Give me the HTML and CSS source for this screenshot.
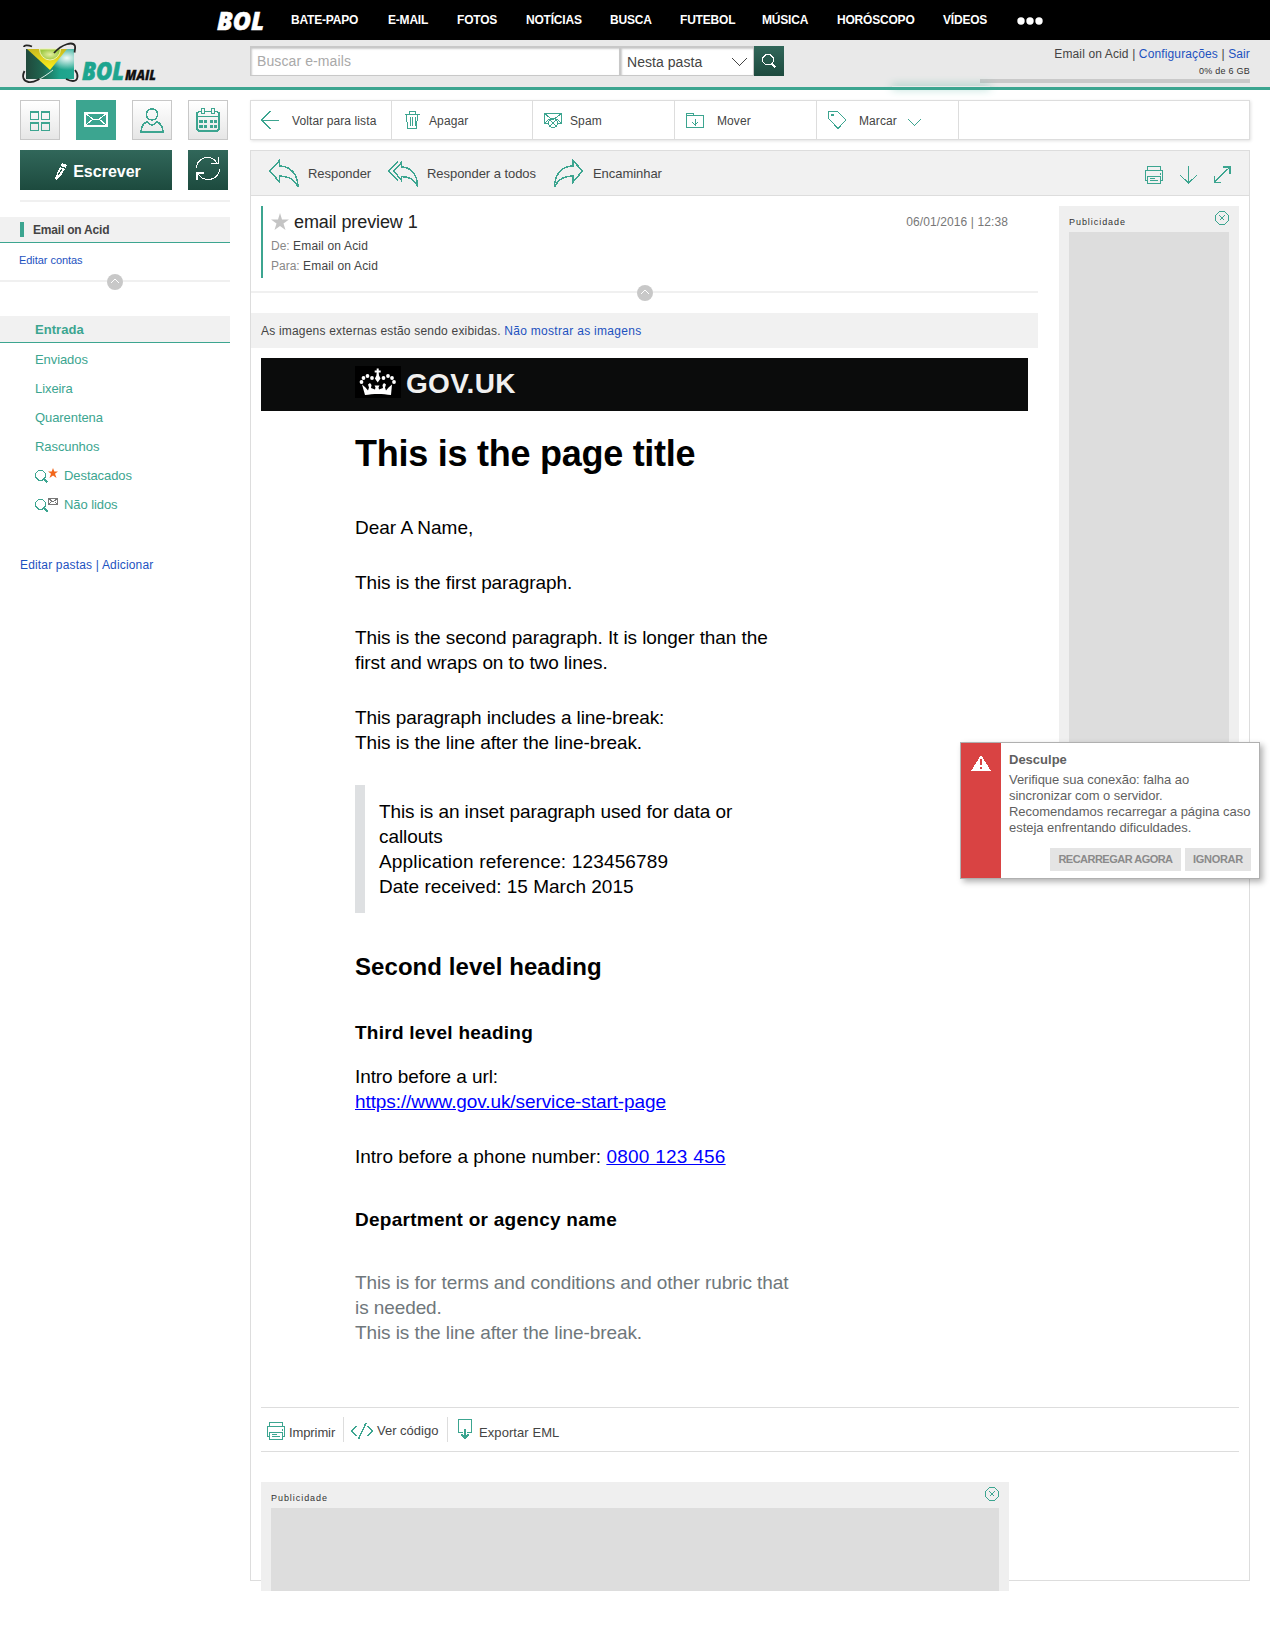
FILE: index.html
```html
<!DOCTYPE html>
<html lang="pt-BR">
<head>
<meta charset="utf-8">
<title>BOL Mail</title>
<link rel="stylesheet" href="styles.css">
</head>
<body>
<svg class="defs" width="0" height="0">
  <symbol id="printer" viewBox="0 0 18 18"><path d="M2.5 4.5v-4h13v4M2.5 14.500h-2v-10h17v10h-2M2.500 17.500v-7h13v7zM15 6.500v2M4.500 12.500h5M4.500 14.500h8"/></symbol>
  <symbol id="close" viewBox="0 0 14 14"><path d="M4.500.5h5l4 4v5l-4 4h-5l-4-4v-5zM4.500 4.500l5 5M9.500 4.500l-5 5"/></symbol>
  <symbol id="collapse" viewBox="0 0 16 16"><circle cx="8" cy="8" r="8" fill="#c8c8c8" stroke="none" shape-rendering="auto"/><path d="M3.500 9.500L8 5l4.500 4.500" stroke="#fff"/></symbol>
  <symbol id="lens" viewBox="0 0 13 13"><path d="M3.500.5h4l3 3v3.500l-3 3h-4l-3-3V3.500z"/><path d="M8.500 8.500l4 4" stroke-width="2"/></symbol>
</svg>

<nav class="topbar">
  <svg class="bol" width="60" height="40"><text x="1" y="29.500" textLength="47" lengthAdjust="spacingAndGlyphs">BOL</text></svg>
  <div class="topnav">
    <a>BATE-PAPO</a><a>E-MAIL</a><a>FOTOS</a><a>NOTÍCIAS</a><a>BUSCA</a><a>FUTEBOL</a><a>MÚSICA</a><a>HORÓSCOPO</a><a>VÍDEOS</a>
    <svg width="26" height="8" fill="#fff"><circle cx="4" cy="4" r="3.700"/><circle cx="13" cy="4" r="3.700"/><circle cx="22" cy="4" r="3.700"/></svg>
  </div>
</nav>

<header class="header">
  <svg class="logo" width="150" height="47" viewBox="0 0 150 47">
    <defs>
      <linearGradient id="env" x1="0" y1="0" x2="1" y2="0"><stop offset="0" stop-color="#20483b"/><stop offset=".35" stop-color="#1f6650"/><stop offset=".7" stop-color="#1da38b"/><stop offset="1" stop-color="#20a891"/></linearGradient>
      <linearGradient id="flap" x1="0" y1="0" x2="0" y2="1"><stop offset="0" stop-color="#c8b820"/><stop offset="1" stop-color="#fff21a"/></linearGradient>
      <radialGradient id="shine" cx=".85" cy=".3" r=".4"><stop offset="0" stop-color="#fff" stop-opacity=".95"/><stop offset="1" stop-color="#fff" stop-opacity="0"/></radialGradient>
      <radialGradient id="ball"><stop offset="0" stop-color="#e3efa0"/><stop offset="1" stop-color="#9cc840"/></radialGradient>
    </defs>
    <path d="M6 9h48v30H6z" fill="url(#env)"/>
    <path d="M6 9h48v30H6z" fill="url(#shine)"/>
    <path d="M7 9h40L30 30z" fill="url(#flap)"/>
    <path d="M19.500 9h21a10.500 11 0 0 1-21 0z" fill="url(#ball)" stroke="#edf5b0"/>
    <path d="M33 30C28 34 22 38 16 41" fill="none" stroke="#dcefe7" stroke-width="1"/>
    <path d="M34 13C42 4 53 1 55 6c.5 2 0 4-.5 6.500M12 6.500C8 5 4 5 4 7M4.500 31c-3 6-1 10 4 11 4 1 7-1 11-3M55 30c4 5 3 11-2 11-3 0-5-1-7-2" fill="none" stroke="#242424" stroke-width="1.800"/>
    <text class="logo-bol" x="62" y="39.500" textLength="42" lengthAdjust="spacingAndGlyphs">BOL</text>
    <text class="logo-mail" x="105" y="39.500" textLength="31" lengthAdjust="spacingAndGlyphs">MAIL</text>
  </svg>
  <div class="search">
    <div class="search-input">Buscar e-mails</div>
    <div class="search-scope"><span>Nesta pasta</span><svg class="ico dark" width="15" height="9"><path d="M.5.5L7.500 7.500l7-7"/></svg></div>
    <div class="search-btn"><svg class="ico white" width="14" height="14" viewBox="0 0 13 13"><use href="#lens"/></svg></div>
  </div>
  <div class="account">
    <div class="account-links">Email on Acid | <a>Configurações</a> | <a>Sair</a></div>
    <div class="quota">0% de 6 GB</div>
    <div class="quota-bar"></div>
  </div>
  <div class="loading"></div>
</header>

<div class="layout">
  <aside class="sidebar">
    <div class="tiles">
      <div class="tile"><svg class="ico t-grid" width="20" height="20" fill-rule="evenodd"><path d="M0 0h9v9H0zM1 2v6h7V2zM11 0h9v9h-9zM12 2v6h7V2zM0 11h9v9H0zM1 13v6h7v-6zM11 11h9v9h-9zM12 13v6h7v-6z"/></svg></div>
      <div class="tile active"><svg class="ico white" width="24" height="15"><path d="M1 1h22v13H1z" stroke-width="2"/><path d="M2 2l7 5 3 1 3-1 7-5M2 13l7-6M22 13l-7-6"/></svg></div>
      <div class="tile"><svg class="ico" width="24" height="25"><path d="M12 1c3.500 0 5.500 2 5.500 5.500S15 12 12 12 6.500 10 6.500 6.500 8.500 1 12 1zM1 24h22c0-6-3-9-6.500-10.500C15 16 13 17 12 17s-3-1-4.500-3.500C4 15 1 18 1 24z" stroke-width="1.500"/></svg></div>
      <div class="tile"><svg class="ico" width="24" height="24"><path d="M5.500 3.500H3L1 5v16l2 2h18l2-2V5l-2-1.500h-2.500M9 3.500h6M1 8.500h22" stroke-width="1.500"/><path d="M5.500.500h3v5h-3zM15.500.500h3v5h-3z"/><path d="M3 12h4v3H3zM8 12h3v3H8zM14 12h3v3h-3zM18 12h3v3h-3zM3 17h4v3H3zM8 17h3v3H8zM14 17h3v3h-3zM18 17h3v3h-3z" fill="#3ca590" stroke="none"/></svg></div>
    </div>
    <div class="compose-row">
      <div class="compose"><svg width="12" height="17" fill="#fff" shape-rendering="crispEdges"><path d="M7 0l5 2-1 3-5-2zM5 4l5 2-5 8-4 3-1-2z"/><path d="M7 6L3 12" stroke="#265446"/></svg><span>Escrever</span></div>
      <div class="refresh"><svg class="ico white" width="26" height="26"><path d="M1.500 12C1.500 6 6.500 1.500 12 1.500c4.500 0 8 2 10 5.500M24.500 13c0 6-5 10.500-11.500 10.500-4.500 0-7.500-2-9.500-5.500"/><path d="M23.500 1v6.500H16M2 24v-7h7" stroke-width="1.500"/></svg></div>
    </div>
    <div class="rule"></div>
    <div class="account-band"><i></i><span>Email on Acid</span></div>
    <div class="edit-accounts">Editar contas</div>
    <div class="collapse-line side"><svg class="ico" width="16" height="16"><use href="#collapse"/></svg></div>
    <ul class="folders">
      <li class="current">Entrada</li>
      <li>Enviados</li>
      <li>Lixeira</li>
      <li>Quarentena</li>
      <li>Rascunhos</li>
      <li><svg class="ico" width="29" height="16"><svg y="2" width="13" height="13"><use href="#lens"/></svg><path d="M18 0l1.300 3.500H23l-3 2.200L21.500 10 18 7.500 14.500 10 16 5.700 13 3.500h3.700z" fill="#f2661b" stroke="none" shape-rendering="auto"/></svg>Destacados</li>
      <li><svg class="ico" width="29" height="16"><svg y="2" width="13" height="13"><use href="#lens"/></svg><path d="M13.500 1.500h9v6h-9zM14 2l4 3 4-3M14 7l2-2M22 7l-2-2" stroke="#777"/></svg>Não lidos</li>
    </ul>
    <div class="edit-folders">Editar pastas | Adicionar</div>
  </aside>

  <main class="main">
    <div class="toolbar">
      <div class="tool"><svg class="ico" width="18" height="18"><path d="M9.500 0L.500 9l9 9M.5 9H18"/></svg><span class="t-voltar">Voltar para lista</span></div>
      <div class="tool"><svg class="ico" width="15" height="18"><path d="M0 3.500h15M4.500 3V.500h6V3M1.500 3.500l1 14h9l1-14M5 6v9M7.500 6v9M10 6v9"/></svg><span class="t-apagar">Apagar</span></div>
      <div class="tool"><svg class="ico" width="18" height="17"><path d="M5 11.500H.500V1.500h17v10H13M1 2l8 6 8-6M1 11l4-4M17 11l-4-4"/><circle cx="9" cy="11" r="4.500"/><path d="M6 8l6 6M12 8l-6 6"/></svg><span class="t-spam">Spam</span></div>
      <div class="tool"><svg class="ico" width="18" height="15"><path d="M.5 14.500V.500h7v2h10v12zM.5 2.500h8M9 5.500v7M6.500 9.500L9 12l2.500-2.500"/></svg><span class="t-mover">Mover</span></div>
      <div class="tool"><svg class="ico" width="19" height="18"><path d="M.500.500h9L18 9l-8 8.500L.500 7.500zM3.500 3.500h2v1h-2z"/></svg><span class="t-marcar">Marcar</span><svg class="ico chev" width="13" height="8"><path d="M.5 .5l6 6 6-6"/></svg></div>
    </div>

    <section class="panel">
      <div class="panel-head">
        <svg class="ico" width="30" height="30"><path d="M1 12L10.500 1.500V7C21 7 29 15 29 28c-4-8-9-10.500-18.500-11v6z" stroke-width="1.500"/></svg><span class="a-resp">Responder</span>
        <svg class="ico" width="31" height="26"><path d="M6 10L13.500 1.500V6C22 6 29.500 13 29.500 25c-4-7-8-9-16-9.500v4z" stroke-width="1.500"/><path d="M10 .500L1 10l9 9.500" stroke-width="1.500"/></svg><span class="a-all">Responder a todos</span>
        <svg class="ico" width="31" height="30"><path d="M29.500 12L20 1.500V7C9.500 7 1.500 15 1.500 28c4-8 9-10.500 18.500-11v6z" stroke-width="1.500"/></svg><span class="a-fwd">Encaminhar</span>
        <div class="panel-actions">
          <svg class="ico" width="18" height="18"><use href="#printer"/></svg>
          <svg class="ico" width="18" height="18"><path d="M9.500 0v17M1 9l8.500 8L18 9"/></svg>
          <svg class="ico" width="18" height="18"><path d="M1 16.500L17 1M10 1h7v7M1.500 9.500v7h6" stroke-width="1.300"/></svg>
        </div>
      </div>

      <div class="panel-body">
        <div class="message">
          <div class="msg-head">
            <div class="msg-info">
              <div class="subject"><svg width="18" height="18" fill="#c4c4c4"><path d="M9 0l2 6.500h7l-5.500 4L14.500 17 9 13l-5.500 4 2-6.500L0 6.500h7z"/></svg><span>email preview 1</span></div>
              <div class="who">De: <b>Email on Acid</b></div>
              <div class="who">Para: <b>Email on Acid</b></div>
            </div>
            <div class="date">06/01/2016 | 12:38</div>
          </div>
          <div class="collapse-line"><svg class="ico" width="16" height="16"><use href="#collapse"/></svg></div>
          <div class="notice"><span>As imagens externas estão sendo exibidas.</span> <a>Não mostrar as imagens</a></div>

          <div class="gov">
            <div class="gov-bar">
              <svg width="46" height="32" fill="#fff"><path d="M0 0h46v32H0z" fill="#000"/><path d="M10 29L7 18.500l3.500 3 2.500 3 1-3-1-3 2-1.500 1.500 2-.5 3 4 1.500.5-2-1-2h5l-1 2 .5 2 4-1.500-.5-3 1.500-2 2 1.500-1 3 1 3 2.500-3 3.500-3L36 29c-8-1.500-18-1.500-26 0z"/><path d="M21.700 2.500h2v2h2v2h-2l.3 3 1.500 3-2.800 4-2.800-4 1.500-3 .3-3h-2v-2h2z"/><circle cx="6.500" cy="16" r="1.900"/><circle cx="8.500" cy="12" r="1.900"/><circle cx="12.500" cy="10" r="1.900"/><circle cx="17" cy="12" r="1.900"/><circle cx="28.500" cy="12" r="1.900"/><circle cx="33" cy="10" r="1.900"/><circle cx="37" cy="12" r="1.900"/><circle cx="39" cy="16" r="1.900"/></svg>
              <span>GOV.UK</span>
            </div>
            <article class="mail">
              <h1>This is the page title</h1>
              <p class="dear">Dear A Name,</p>
              <p>This is the first paragraph.</p>
              <p>This is the second paragraph. It is longer than the<br>first and wraps on to two lines.</p>
              <p>This paragraph includes a line-break:<br>This is the line after the line-break.</p>
              <blockquote>This is an inset paragraph used for data or<br>callouts<br><span class="ref">Application reference: 123456789</span><br><span class="received">Date received: 15 March 2015</span></blockquote>
              <h2>Second level heading</h2>
              <h3>Third level heading</h3>
              <p>Intro before a url:<br><a>https://www.gov.uk/service-start-page</a></p>
              <p class="tel">Intro before a phone number: <a>0800 123 456</a></p>
              <h3 class="dept">Department or agency name</h3>
              <p class="terms">This is for terms and conditions and other rubric that<br>is needed.<br>This is the line after the line-break.</p>
            </article>
          </div>
        </div>
        <div class="ad-side"><div class="ad-top"><span>Publicidade</span><svg class="ico" width="14" height="14"><use href="#close"/></svg></div><div class="ad-slot"></div></div>
      </div>

      <div class="msg-tools">
        <div class="mt"><svg class="ico" width="18" height="18"><use href="#printer"/></svg><span class="m-imp">Imprimir</span></div>
        <div class="mt"><svg class="ico code" width="22" height="18"><path d="M5.500 4L1 9l4.500 5M16.500 4L21 9l-4.500 5M15 1L7.500 17"/></svg><span class="m-ver">Ver código</span></div>
        <div class="mt"><svg class="ico" width="15" height="21"><path d="M5 13.500H.500V.500h13v13H9"/><path d="M7 10v9M3.500 15.500L7 19l3.500-3.500" stroke-width="1.500"/></svg><span class="m-eml">Exportar EML</span></div>
      </div>
      <div class="ad-bottom"><div class="ad-top"><span>Publicidade</span><svg class="ico" width="14" height="14"><use href="#close"/></svg></div><div class="ad-slot"></div></div>
    </section>
  </main>
</div>

<div class="toast">
  <div class="toast-icon"><svg width="20" height="16" shape-rendering="crispEdges"><path d="M10 0l10 16H0z" fill="#fff"/><path d="M9 4h2v6H9zM9 12h2v2H9z" fill="#d94343"/></svg></div>
  <div class="toast-body">
    <strong>Desculpe</strong>
    <p>Verifique sua conexão: falha ao<br>sincronizar com o servidor.<br>Recomendamos recarregar a página caso<br>esteja enfrentando dificuldades.</p>
    <div class="toast-btns"><span class="btn wide">RECARREGAR AGORA</span><span class="btn">IGNORAR</span></div>
  </div>
</div>
</body>
</html>
```
FILE: styles.css
```css
* { box-sizing: border-box; }
body { margin: 0; width: 1270px; height: 1631px; background: #fff; color: #444; font: 12px/16px "Liberation Sans", Arial, sans-serif; position: relative; white-space: nowrap; }
svg { display: block; flex: none; }
.defs { position: absolute; }
.ico { fill: none; stroke: #3ca590; shape-rendering: crispEdges; }
.ico.white { stroke: #fff; }
.ico.dark { stroke: #444; }

/* top bars */
.topbar { height: 40px; background: #000; display: flex; padding-left: 216px; align-items: center; }
.bol { margin-right: 15px; }
.bol text { font: italic 800 25px "Open Sans", sans-serif; fill: #fff; stroke: #fff; stroke-width: .5px; }
.topnav { display: grid; grid-template-columns: 97px 69px 69px 84px 70px 82px 75px 106px 74px 26px; align-items: center; color: #fff; font-weight: bold; letter-spacing: -.2px; }
.topnav svg { margin-top: 1px; }
.header { height: 50px; background: #e9e9e9; border-bottom: 3px solid #3ca590; display: flex; position: relative; }
.logo { margin-left: 20px; margin-right: 80px; }
.logo-bol { font: italic 800 24px "Open Sans", sans-serif; fill: #1da58f; stroke: #1da58f; stroke-width: .6px; }
.logo-mail { font: italic 800 14px "Open Sans", sans-serif; fill: #111; stroke: #111; stroke-width: .3px; }
.search { display: flex; height: 30px; margin-top: 6px; width: 534px; }
.search-input, .search-scope { background: #fff; border: 1px solid #c8c8c8; border-top-width: 2px; box-shadow: inset 1px 1px 2px #ccc; }
.search-input { width: 370px; padding: 5px 6px; color: #a9a9a9; font-size: 14px; letter-spacing: .1px; }
.search-scope { width: 134px; padding: 6px 6px 0 6px; display: flex; justify-content: space-between; font-size: 14px; letter-spacing: .05px; }
.search-scope svg { margin-top: 4px; }
.search-btn { width: 30px; background: linear-gradient(#31675a, #1d4a3e); display: grid; place-items: center; }
.account { margin-left: auto; margin-right: 20px; width: 270px; text-align: right; padding-top: 5px; }
.account a, .notice a { color: #1d52bf; }
.account-links { font-size: 12px; line-height: 18px; letter-spacing: .13px; }
.quota { font-size: 9px; line-height: 17px; height: 15px; letter-spacing: .25px; color: #333; }
.quota-bar { height: 4px; background: #c9c9c9; margin-top: 1px; }
.loading { position: absolute; left: 892px; top: 46px; width: 98px; height: 2px; box-shadow: 0 0 8px #3ca590; }

.layout { display: flex; padding-top: 10px; }

/* sidebar */
.sidebar { width: 230px; margin-right: 20px; }
.tiles { display: flex; gap: 16px; margin-left: 20px; }
.tile { width: 40px; height: 40px; border: 1px solid #c8c8c8; background: linear-gradient(#fff, #e6e6e6); display: grid; place-items: center; }
.tile.active { background: #3ca590; border-color: #3ca590; }
.tile .t-grid { margin-top: 2px; fill: #3ca590; stroke: none; }
.tile.active svg { margin-top: -2px; }
.compose-row { display: flex; gap: 16px; margin: 10px 0 10px 20px; }
.compose, .refresh { height: 40px; background: linear-gradient(#31675a, #1d4a3e); display: flex; align-items: center; justify-content: center; color: #fff; }
.compose { width: 152px; gap: 6px; font-weight: bold; font-size: 16px; padding-top: 3px; padding-left: 4px; }
.refresh { width: 40px; padding-bottom: 2px; }
.rule { height: 2px; background: #f0f0f0; margin-left: 20px; }
.account-band { height: 26px; margin-top: 15px; background: #f1f1f1; border-bottom: 1px solid #3ca590; display: flex; align-items: center; padding-left: 20px; font-weight: bold; letter-spacing: -.2px; }
.account-band i { width: 4px; height: 15px; background: #3ca590; margin-right: 9px; }
.edit-accounts { color: #1d52bf; font-size: 11px; margin: 9px 0 12px 19px; height: 16px; letter-spacing: -.05px; }
.collapse-line { height: 2px; background: #f0f0f0; display: flex; justify-content: center; align-items: center; }
.collapse-line svg { margin-top: 2px; }
.folders { list-style: none; margin: 34px 0 0; padding: 0; color: #3ca590; font-size: 13px; }
.folders li { height: 29px; padding-left: 35px; display: flex; align-items: center; letter-spacing: -.08px; }
.folders .current { height: 27px; background: #f1f1f1; border-bottom: 1px solid #3ca590; font-weight: bold; margin-bottom: 2px; letter-spacing: .05px; padding-top: 1px; }
.edit-folders { color: #1d52bf; margin: 38px 0 0 20px; letter-spacing: .17px; }

/* toolbar */
.main { width: 1000px; }
.toolbar { height: 40px; border: 1px solid #ddd; box-shadow: 1px 1px 3px rgba(0,0,0,.12); display: flex; letter-spacing: .1px; }
.tool { width: 142px; border-right: 1px solid #ddd; display: flex; align-items: center; padding-left: 11px; }
.tool:first-child { width: 141px; padding-left: 10px; }
.tool:nth-child(2) { width: 141px; padding-left: 13px; }
.tool span { padding-top: 2px; }
.t-voltar { margin-left: 13px; }
.t-apagar { margin-left: 9px; }
.t-spam { margin-left: 8px; }
.t-mover { margin-left: 13px; }
.t-marcar { margin: 0 11px 0 12px; }
.tool .chev { margin-top: 5px; }

/* message panel */
.panel { height: 1431px; margin-top: 10px; border: 1px solid #ddd; }
.panel-head { height: 45px; background: #f1f1f1; border-bottom: 1px solid #ddd; display: flex; align-items: center; padding-left: 18px; font-size: 13px; }
.panel-head > svg { margin-top: 1px; }
.panel-head > span { height: 14px; letter-spacing: -.05px; }
.a-resp { width: 80px; margin-left: 9px; }
.a-all { width: 126px; margin-left: 8px; }
.a-fwd { margin-left: 9px; }
.panel-actions { display: flex; gap: 16px; margin-left: auto; margin-right: 18px; padding-top: 3px; }
.panel-body { display: flex; height: 1211px; }
.message { width: 787px; padding-top: 10px; }
.msg-head { display: flex; justify-content: space-between; padding: 0 30px 0 10px; height: 85px; }
.msg-info { height: 72px; border-left: 2px solid #3ca590; padding: 5px 0 0 8px; }
.subject { display: flex; gap: 5px; color: #222; font-size: 18px; line-height: 22px; height: 23px; letter-spacing: -.1px; }
.subject svg { margin-top: 2px; }
.who { color: #888; height: 20px; line-height: 24px; }
.who b { color: #444; font-weight: normal; letter-spacing: .18px; }
.date { color: #777; padding-top: 8px; letter-spacing: .1px; }
.notice { height: 35px; margin-top: 20px; background: #f1f1f1; padding-left: 10px; line-height: 36px; letter-spacing: .2px; }
.notice a { letter-spacing: .3px; }
.gov { margin: 10px 10px 0; }
.gov-bar { height: 53px; background: #0b0c0c; padding: 8px 0 0 94px; display: flex; gap: 5px; color: #f0f0f0; font: bold 28px/36px "Liberation Sans", Arial, sans-serif; letter-spacing: .3px; }
.mail { padding-left: 94px; color: #000; font-size: 19px; line-height: 25px; letter-spacing: -.09px; }
.mail h1 { font-size: 36px; line-height: 40px; margin: 23px 0 41px; letter-spacing: -.26px; }
.mail p { margin: 0 0 30px; }
.mail .dear { letter-spacing: 0; }
.mail a { color: #00f; text-decoration: underline; }
.mail blockquote { margin: 0 0 36px; height: 128px; border-left: 10px solid #dee0e2; padding: 14px; }
.mail .ref { letter-spacing: .16px; }
.mail .received { letter-spacing: 0; }
.mail h2 { font-size: 24px; line-height: 36px; margin: 0 0 35px; letter-spacing: .06px; }
.mail h3 { font-size: 19px; line-height: 25px; margin: 0 0 19px; letter-spacing: .26px; }
.mail .tel { letter-spacing: 0; }
.mail .tel a { letter-spacing: .25px; }
.mail .dept { margin: 38px 0 38px; }
.mail .terms { color: #6f777b; }

/* ads */
.ad-side { width: 180px; height: 636px; margin: 10px 0 0 21px; padding: 0 10px; background: #efefef; }
.ad-top { display: flex; justify-content: space-between; height: 26px; font-size: 9px; letter-spacing: .95px; color: #333; }
.ad-top span { line-height: 33px; }
.ad-top svg { margin-top: 5px; }
.ad-slot { height: 600px; background: #ddd; }
.ad-bottom { width: 748px; height: 109px; margin: 30px 0 0 10px; padding: 0 10px; background: #efefef; }
.ad-bottom .ad-slot { height: 83px; }

.msg-tools { height: 45px; margin: 0 10px; border: solid #ddd; border-width: 1px 0; display: flex; font-size: 13px; }
.mt { display: flex; margin-top: 9px; height: 25px; padding: 5px 7px 0; border-right: 1px solid #ddd; }
.mt:first-child { padding-left: 6px; width: 83px; }
.mt:nth-child(2) { width: 104px; }
.mt:last-child { border: 0; padding: 2px 10px 0; }
.m-imp { margin: 3px 0 0 4px; letter-spacing: -.1px; }
.m-ver { margin: 1px 0 0 4px; }
.m-eml { margin: 6px 0 0 6px; letter-spacing: .08px; }
.code { stroke-width: 1.5; }

/* connection warning floating above the page */
.toast { position: absolute; left: 960px; top: 742px; width: 300px; height: 137px; border: 1px solid #b0b0b0; background: #fff; box-shadow: 3px 3px 6px rgba(0,0,0,.3); display: flex; color: #5f5f5f; font-size: 13px; }
.toast-icon { width: 40px; background: #d94343; padding: 12px 0 0 10px; }
.toast-body { padding: 9px 8px 0; width: 258px; }
.toast-body strong { display: block; }
.toast p { margin: 4px 0 12px; letter-spacing: -.04px; }
.toast-btns { display: flex; gap: 4px; justify-content: flex-end; }
.btn { width: 66px; height: 23px; background: #e4e4e4; color: #8a8a8a; font: bold 11px/23px "Liberation Sans", Arial, sans-serif; text-align: center; letter-spacing: -.3px; }
.btn.wide { width: 131px; letter-spacing: -.52px; }
```
